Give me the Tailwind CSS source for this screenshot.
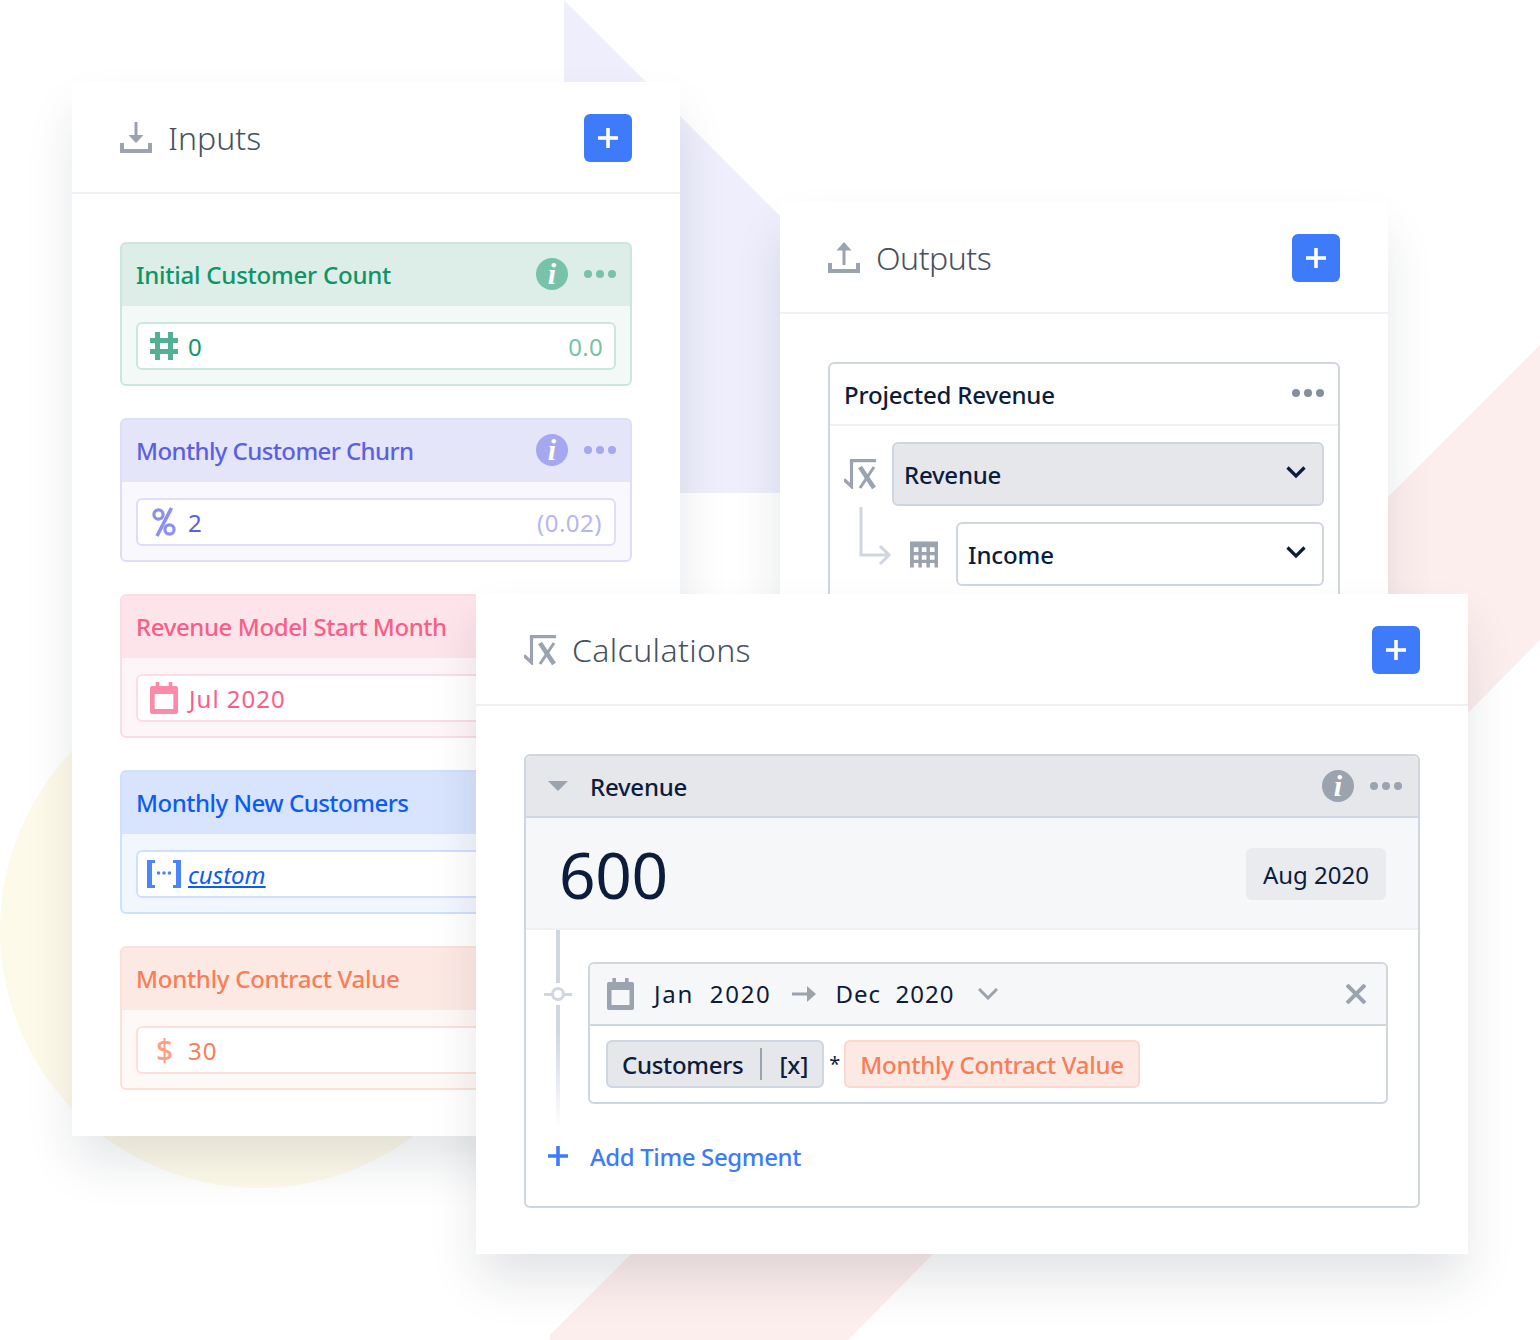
<!DOCTYPE html>
<html><head><meta charset="utf-8"><script src="https://cdn.jsdelivr.net/npm/@tailwindcss/browser@4"></script></head>
<body class="bg-white">
<div class="relative w-[1540px] h-[1340px] overflow-hidden bg-white font-['Noto_Sans',sans-serif]">
  <svg class="absolute inset-0" width="1540" height="1340" viewBox="0 0 1540 1340">
    <circle cx="258" cy="930" r="258" fill="#fefaea"/>
    <polygon points="564,0 780,216 780,493 564,493" fill="#eeeefc"/>
    <polygon points="1540,345 550,1335 550,1340 848,1340 1540,640" fill="#fdeeee"/>
  </svg>

  <!-- Inputs -->
  <section class="absolute left-[72px] top-[82px] w-[608px] h-[1054px] bg-white shadow-[0_28px_48px_-4px_rgba(20,30,50,0.12)]">
    <header class="h-[112px] border-b-2 border-[#eff0f4] flex items-center justify-between px-[48px] pt-[2px]">
      <div class="flex items-center gap-[16px]">
        <svg width="32" height="32" viewBox="0 0 32 32" fill="#9aa3ae"><path d="M14.5 0h3v16h-3z"/><path d="M8.5 13h15L16 21z"/><path d="M0 21h4v6h24v-6h4v10H0z"/></svg>
        <span class="text-[32px] leading-none text-[#46525e] font-light">Inputs</span>
      </div>
      <button class="w-[48px] h-[48px] rounded-[6px] bg-[#3e7bfa] flex items-center justify-center"><svg width="22" height="22" viewBox="0 0 22 22" fill="#fff"><path d="M9.2 1h3.6v20H9.2z"/><path d="M1 9.2h20v3.6H1z"/></svg></button>
    </header>
    <div class="px-[48px] pt-[48px] flex flex-col gap-[32px]">
      <!-- green -->
      <div class="h-[144px] rounded-[6px] border-2 border-[#cbe6dc] bg-[#f2f9f6] overflow-hidden">
        <div class="h-[64px] -mx-[2px] -mt-[2px] px-[14px] bg-[#dceee7] border-[#b1dccd] border-2 border-b-0 rounded-t-[6px] flex items-center justify-between">
          <span class="text-[24px] leading-none font-medium tracking-[-0.23px] text-[#0f9468]">Initial Customer Count</span>
          <div class="flex items-center gap-[16px] mb-[2px]">
            <span class="w-[32px] h-[32px] rounded-full bg-[#78c2a9] flex items-center justify-center text-white italic font-bold text-[30px] leading-none font-['Liberation_Serif',serif]">i</span>
            <span class="flex gap-[4px]"><i class="w-[8px] h-[8px] rounded-full bg-[#78c2a9]"></i><i class="w-[8px] h-[8px] rounded-full bg-[#78c2a9]"></i><i class="w-[8px] h-[8px] rounded-full bg-[#78c2a9]"></i></span>
          </div>
        </div>
        <div class="mx-[14px] mt-[16px] h-[48px] rounded-[6px] border-2 border-[#cbe6dc] bg-white flex items-center pl-[12px] pr-[11px] pt-[2px] justify-between">
          <div class="flex items-center gap-[8px]">
            <svg class="-mt-[2px]" width="30" height="30" viewBox="0 0 30 30" fill="#54b093"><path d="M5 1h5v28H5zM18 1h5v28h-5z"/><path d="M0 7h28v5H0zM0 18h28v5H0z"/></svg>
            <span class="text-[24px] leading-none text-[#0f9468]">0</span>
          </div>
          <span class="text-[24px] leading-none tracking-[0.3px] text-[#78c2a9]">0.0</span>
        </div>
      </div>
      <!-- purple -->
      <div class="h-[144px] rounded-[6px] border-2 border-[#dedefa] bg-[#f8f8fe] overflow-hidden">
        <div class="h-[64px] -mx-[2px] -mt-[2px] px-[14px] bg-[#e5e5fa] border-[#cdcdf6] border-2 border-b-0 rounded-t-[6px] flex items-center justify-between">
          <span class="text-[24px] leading-none font-medium tracking-[-0.6px] text-[#5c60e0]">Monthly Customer Churn</span>
          <div class="flex items-center gap-[16px] mb-[2px]">
            <span class="w-[32px] h-[32px] rounded-full bg-[#a5a7ef] flex items-center justify-center text-white italic font-bold text-[30px] leading-none font-['Liberation_Serif',serif]">i</span>
            <span class="flex gap-[4px]"><i class="w-[8px] h-[8px] rounded-full bg-[#a5a7ef]"></i><i class="w-[8px] h-[8px] rounded-full bg-[#a5a7ef]"></i><i class="w-[8px] h-[8px] rounded-full bg-[#a5a7ef]"></i></span>
          </div>
        </div>
        <div class="mx-[14px] mt-[16px] h-[48px] rounded-[6px] border-2 border-[#dedefa] bg-white flex items-center pl-[12px] pr-[12px] pt-[2px] justify-between">
          <div class="flex items-center gap-[8px]">
            <svg class="-mt-[2px]" width="30" height="30" viewBox="0 0 30 30" fill="none" stroke="#8d90ec" stroke-width="3.2"><circle cx="8.5" cy="7.5" r="4.6"/><circle cx="19.5" cy="22.5" r="4.6"/><path d="M21.5 1 7 29" stroke-width="3.6"/></svg>
            <span class="text-[24px] leading-none text-[#5c60e0]">2</span>
          </div>
          <span class="text-[24px] leading-none tracking-[0.5px] text-[#b5b6f2]">(0.02)</span>
        </div>
      </div>
      <!-- pink -->
      <div class="h-[144px] rounded-[6px] border-2 border-[#fcdce5] bg-[#fef5f8] overflow-hidden">
        <div class="h-[64px] -mx-[2px] -mt-[2px] px-[14px] bg-[#fde4eb] border-[#fdcdda] border-2 border-b-0 rounded-t-[6px] flex items-center">
          <span class="text-[24px] leading-none font-medium tracking-[-0.4px] text-[#fb5d87]">Revenue Model Start Month</span>
        </div>
        <div class="mx-[14px] mt-[16px] h-[48px] rounded-[6px] border-2 border-[#fcdce5] bg-white flex items-center pl-[12px] pr-[10px] pt-[2px]">
          <div class="flex items-center gap-[11px]">
            <svg class="-mt-[2px]" width="28" height="32" viewBox="0 0 30 32" preserveAspectRatio="none" fill="#fd8aa8"><path fill-rule="evenodd" d="M6 0h4v4h10V0h4v4h4a2 2 0 0 1 2 2v24a2 2 0 0 1-2 2H2a2 2 0 0 1-2-2V6a2 2 0 0 1 2-2h4zM5 12v15h20V12z"/></svg>
            <span class="text-[24px] leading-none tracking-[1px] text-[#fb5d87]">Jul 2020</span>
          </div>
        </div>
      </div>
      <!-- blue -->
      <div class="h-[144px] rounded-[6px] border-2 border-[#cfe0fe] bg-[#f2f6fe] overflow-hidden">
        <div class="h-[64px] -mx-[2px] -mt-[2px] px-[14px] bg-[#d8e4fd] border-[#b4cdfd] border-2 border-b-0 rounded-t-[6px] flex items-center">
          <span class="text-[24px] leading-none font-medium tracking-[-0.5px] text-[#0b5cf5]">Monthly New Customers</span>
        </div>
        <div class="mx-[14px] mt-[16px] h-[48px] rounded-[6px] border-2 border-[#cfe0fe] bg-white flex items-center pl-[9px] pr-[10px] pt-[2px]">
          <div class="flex items-center gap-[7px]">
            <svg class="-mt-[2px]" width="34" height="28" viewBox="0 0 34 28" fill="#4c84fb"><path d="M0 0h8v3H5v22h3v3H0zM34 0h-8v3h3v22h-3v3h8z"/><circle cx="11.5" cy="13" r="1.8"/><circle cx="17" cy="13" r="1.8"/><circle cx="22.5" cy="13" r="1.8"/></svg>
            <span class="text-[24px] leading-none italic underline text-[#0b5cf5]">custom</span>
          </div>
        </div>
      </div>
      <!-- orange -->
      <div class="h-[144px] rounded-[6px] border-2 border-[#fde0d8] bg-[#fef8f6] overflow-hidden">
        <div class="h-[64px] -mx-[2px] -mt-[2px] px-[14px] bg-[#fde9e4] border-[#fdd6cc] border-2 border-b-0 rounded-t-[6px] flex items-center">
          <span class="text-[24px] leading-none font-medium tracking-[-0.27px] text-[#fb7c55]">Monthly Contract Value</span>
        </div>
        <div class="mx-[14px] mt-[16px] h-[48px] rounded-[6px] border-2 border-[#fde0d8] bg-white flex items-center pl-[18px] pr-[10px] pt-[2px]">
          <div class="flex items-center gap-[14px]">
            <span class="w-[18px] -mt-[3px] text-[30px] leading-none font-medium text-[#fda084]">$</span>
            <span class="text-[24px] leading-none tracking-[1px] text-[#fb7c55]">30</span>
          </div>
        </div>
      </div>
    </div>
  </section>

  <!-- Outputs -->
  <section class="absolute left-[780px] top-[202px] w-[608px] h-[500px] bg-white shadow-[0_28px_48px_-4px_rgba(20,30,50,0.12)]">
    <header class="h-[112px] border-b-2 border-[#eff0f4] flex items-center justify-between px-[48px] pt-[2px]">
      <div class="flex items-center gap-[16px]">
        <svg width="32" height="32" viewBox="0 0 32 32" fill="#9aa3ae"><path d="M14.5 6h3v17h-3z"/><path d="M8.5 8.5h15L16 0z"/><path d="M0 21h4v6h24v-6h4v10H0z"/></svg>
        <span class="text-[32px] leading-none tracking-[-0.5px] text-[#46525e] font-light">Outputs</span>
      </div>
      <button class="w-[48px] h-[48px] rounded-[6px] bg-[#3e7bfa] flex items-center justify-center"><svg width="22" height="22" viewBox="0 0 22 22" fill="#fff"><path d="M9.2 1h3.6v20H9.2z"/><path d="M1 9.2h20v3.6H1z"/></svg></button>
    </header>
    <div class="mx-[48px] mt-[48px] h-[300px] rounded-t-[6px] border-2 border-[#d0d6df]">
      <div class="h-[62px] border-b-2 border-[#eff0f4] flex items-center justify-between px-[14px] pt-[2px]">
        <span class="text-[24px] leading-none font-medium tracking-[-0.18px] text-[#0c1c3c]">Projected Revenue</span>
        <span class="flex gap-[4px] mb-[4px]"><i class="w-[8px] h-[8px] rounded-full bg-[#868e9c]"></i><i class="w-[8px] h-[8px] rounded-full bg-[#868e9c]"></i><i class="w-[8px] h-[8px] rounded-full bg-[#868e9c]"></i></span>
      </div>
      <div class="relative px-[14px] pt-[16px]">
        <div class="flex items-center gap-[16px]">
          <svg width="32" height="30" viewBox="0 0 32 30" fill="none" stroke="#9aa3ae" stroke-width="3.2"><path d="M0 20.5l7.5 7V1.6H32"/><path d="M16 8l14 21" stroke-width="4.6"/><path d="M30 8 16 29" stroke-width="3"/></svg>
          <div class="flex-1 h-[64px] rounded-[6px] border-2 border-[#d0d6df] bg-[#e5e7eb] flex items-center justify-between pl-[10px] pr-[16px]">
            <span class="pt-[2px] text-[24px] leading-none font-medium tracking-[-0.25px] text-[#0c1c3c]">Revenue</span>
            <svg class="-mt-[3px]" width="20" height="13" viewBox="0 0 20 13" fill="none" stroke="#0c1c3c" stroke-width="3.2"><path d="M1.5 1.5l8.5 8.5 8.5-8.5"/></svg>
          </div>
        </div>
        <div class="flex items-center mt-[16px] pl-[66px]">
          <svg class="mr-[18px]" width="28" height="27" viewBox="0 0 29 27" fill="#9aa3ae"><path d="M0 0h29v6H0zM0 0h4v27H0zM8.7 0h3.6v27H8.7zM17 0h3.6v27H17zM25.4 0H29v27h-3.6zM0 11h29v3.4H0zM0 19h29v3.4H0z"/></svg>
          <div class="flex-1 h-[64px] rounded-[6px] border-2 border-[#d0d6df] bg-white flex items-center justify-between pl-[10px] pr-[16px]">
            <span class="pt-[2px] text-[24px] leading-none font-medium tracking-[-0.1px] text-[#0c1c3c]">Income</span>
            <svg class="-mt-[3px]" width="20" height="13" viewBox="0 0 20 13" fill="none" stroke="#0c1c3c" stroke-width="3.2"><path d="M1.5 1.5l8.5 8.5 8.5-8.5"/></svg>
          </div>
        </div>
        <svg class="absolute left-[28px] top-[81px]" width="34" height="60" viewBox="0 0 34 60" fill="none" stroke="#d0d6df" stroke-width="3"><path d="M3 0v48h27"/><path d="M22 39l9 9-9 9"/></svg>
      </div>
    </div>
  </section>

  <!-- Calculations -->
  <section class="absolute left-[476px] top-[594px] w-[992px] h-[660px] bg-white shadow-[0_28px_48px_-4px_rgba(20,30,50,0.13)]">
    <header class="h-[112px] border-b-2 border-[#eff0f4] flex items-center justify-between px-[48px] pt-[2px]">
      <div class="flex items-center gap-[16px]">
        <svg width="32" height="30" viewBox="0 0 32 30" fill="none" stroke="#9aa3ae" stroke-width="3.2"><path d="M0 20.5l7.5 7V1.6H32"/><path d="M16 8l14 21" stroke-width="4.6"/><path d="M30 8 16 29" stroke-width="3"/></svg>
        <span class="text-[32px] leading-none tracking-[0.35px] text-[#46525e] font-light">Calculations</span>
      </div>
      <button class="w-[48px] h-[48px] rounded-[6px] bg-[#3e7bfa] flex items-center justify-center"><svg width="22" height="22" viewBox="0 0 22 22" fill="#fff"><path d="M9.2 1h3.6v20H9.2z"/><path d="M1 9.2h20v3.6H1z"/></svg></button>
    </header>
    <div class="mx-[48px] mt-[48px] h-[454px] rounded-[6px] border-2 border-[#d0d6df] overflow-hidden">
      <div class="h-[62px] bg-[#e5e7eb] border-b-2 border-[#d0d6df] flex items-center justify-between pl-[22px] pr-[16px]">
        <div class="flex items-center gap-[22px]">
          <svg width="20" height="10" viewBox="0 0 20 10" fill="#9aa3ae"><path d="M0 0h20l-10 10z"/></svg>
          <span class="pt-[2px] text-[24px] leading-none font-medium tracking-[-0.25px] text-[#0c1c3c]">Revenue</span>
        </div>
        <div class="flex items-center gap-[16px]">
          <span class="w-[32px] h-[32px] rounded-full bg-[#9aa3ae] flex items-center justify-center text-white italic font-bold text-[30px] leading-none font-['Liberation_Serif',serif]">i</span>
          <span class="flex gap-[4px]"><i class="w-[8px] h-[8px] rounded-full bg-[#9aa3ae]"></i><i class="w-[8px] h-[8px] rounded-full bg-[#9aa3ae]"></i><i class="w-[8px] h-[8px] rounded-full bg-[#9aa3ae]"></i></span>
        </div>
      </div>
      <div class="h-[112px] bg-[#f6f7f9] border-b-2 border-[#eff0f4] flex items-center justify-between pl-[33px] pr-[32px] pt-[2px]">
        <span class="mt-[2px] text-[64px] leading-none tracking-[-0.3px] text-[#0c1c3c]">600</span>
        <span class="h-[52px] w-[140px] justify-center pt-[2px] rounded-[6px] bg-[#e9ebee] flex items-center text-[24px] leading-none text-[#0c1c3c]">Aug 2020</span>
      </div>
      <div class="relative pl-[62px] pr-[30px] pt-[32px]">
        <div class="absolute left-[30px] top-0 w-[4px] h-[200px] bg-gradient-to-b from-[#d0d6df] via-[#d0d6df] to-white"></div>
        <div class="absolute left-[18px] top-[53px] w-[28px] h-[22px] flex items-center justify-center bg-white">
          <span class="absolute w-full h-[3px] bg-[#d0d6df]"></span>
          <span class="relative w-[14px] h-[14px] rounded-full border-[3px] border-[#d0d6df] bg-white"></span>
        </div>
        <div class="h-[142px] rounded-[6px] border-2 border-[#d0d6df] overflow-hidden">
          <div class="h-[62px] bg-[#f6f7f9] border-b-2 border-[#d0d6df] flex items-center justify-between pl-[17px] pr-[20px]">
            <div class="flex items-center">
              <svg class="mr-[20px]" width="27" height="32" viewBox="0 0 30 32" preserveAspectRatio="none" fill="#9aa3ae"><path fill-rule="evenodd" d="M6 0h4v4h10V0h4v4h4a2 2 0 0 1 2 2v24a2 2 0 0 1-2 2H2a2 2 0 0 1-2-2V6a2 2 0 0 1 2-2h4zM5 12v15h20V12z"/></svg>
              <span class="text-[24px] leading-none tracking-[1.7px] text-[#0c1c3c] whitespace-pre">Jan  2020</span>
              <svg class="ml-[20px] mr-[20px]" width="24" height="16" viewBox="0 0 24 16" fill="#9aa3ae"><path d="M0 6.5h16v3H0z"/><path d="M15 0l9 8-9 8z"/></svg>
              <span class="text-[24px] leading-none tracking-[1px] text-[#0c1c3c] whitespace-pre">Dec  2020</span>
              <svg class="ml-[23px]" width="20" height="12" viewBox="0 0 20 12" fill="none" stroke="#9aa3ae" stroke-width="3"><path d="M1 1l9 9 9-9"/></svg>
            </div>
            <svg width="20" height="20" viewBox="0 0 20 20" fill="none" stroke="#9aa3ae" stroke-width="4"><path d="M1 1l18 18M19 1 1 19"/></svg>
          </div>
          <div class="h-[78px] flex items-center pl-[16px] pb-[2px]">
            <div class="h-[48px] pt-[2px] rounded-[6px] border-2 border-[#d0d6df] bg-[#e5e7eb] flex items-center pl-[14px] pr-[14px]">
              <span class="text-[24px] leading-none font-medium tracking-[-0.3px] text-[#0c1c3c]">Customers</span>
              <span class="-mt-[2px] w-[2px] h-[32px] bg-[#9aa3ae] mx-[17px]"></span>
              <span class="text-[24px] leading-none font-medium text-[#0c1c3c]">[x]</span>
            </div>
            <span class="ml-[6px] mr-[5px] w-[9px] flex justify-center text-[20px] leading-none text-[#0c1c3c]">*</span>
            <div class="h-[48px] pt-[2px] rounded-[6px] border-2 border-[#fdd6cc] bg-[#fde9e4] flex items-center px-[14px]">
              <span class="text-[24px] leading-none font-medium tracking-[-0.27px] text-[#fb7c55]">Monthly Contract Value</span>
            </div>
          </div>
        </div>
        <div class="absolute left-[21px] top-[213px] flex items-center gap-[21px]">
          <svg width="22" height="22" viewBox="0 0 22 22" fill="#3e7bfa"><path d="M9.2 1h3.6v20H9.2z"/><path d="M1 9.2h20v3.6H1z"/></svg>
          <span class="pt-[2px] text-[24px] leading-none font-medium tracking-[-0.37px] text-[#3e7bfa]">Add Time Segment</span>
        </div>
      </div>
    </div>
  </section>
</div>
</body></html>
